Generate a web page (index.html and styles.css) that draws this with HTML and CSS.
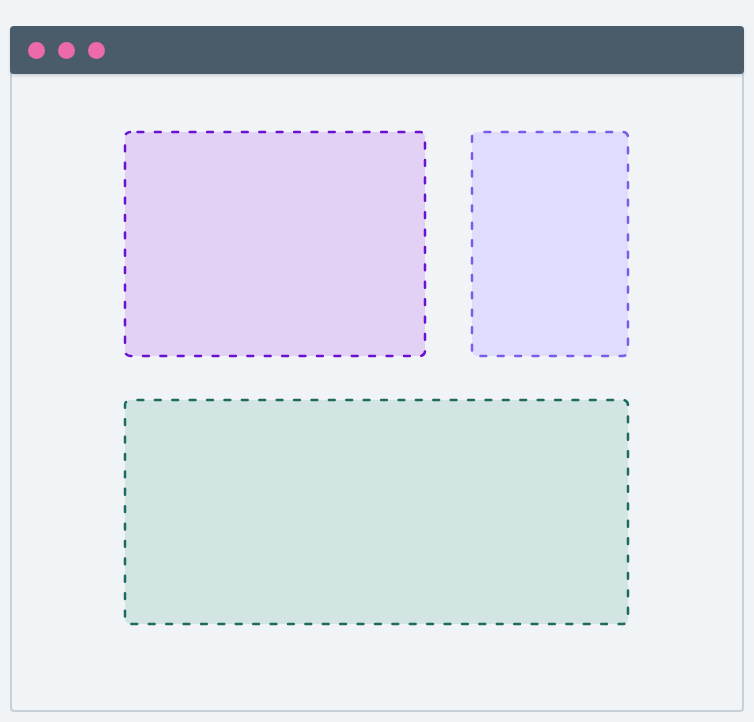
FILE: index.html
```html
<!DOCTYPE html>
<html>
<head>
<meta charset="utf-8">
<link rel="stylesheet" href="styles.css">
</head>
<body>
<div class="window">
  <div class="titlebar">
    <span class="dot"></span><span class="dot"></span><span class="dot"></span>
  </div>
  <div class="content">
    <div class="grid">
      <div class="box box-a"><svg class="outline"><rect x="0" y="0" rx="5" ry="5"/></svg></div>
      <div class="box box-b"><svg class="outline"><rect x="0" y="0" rx="5" ry="5"/></svg></div>
      <div class="box box-c"><svg class="outline"><rect x="0" y="0" rx="5" ry="5"/></svg></div>
    </div>
  </div>
</div>
</body>
</html>
```
FILE: styles.css
```css
html, body {
  margin: 0;
  padding: 0;
  background: #f0f4f7;
  font-family: "Liberation Sans", sans-serif;
}
body {
  padding: 26px 10px 10px 10px;
}
.window {
  width: 734px;
  height: 686px;
  box-sizing: border-box;
  border: 2px solid #c6d0d8;
  border-top: none;
  border-radius: 4px;
  background: #f1f4f7;
  display: flex;
  flex-direction: column;
}
.titlebar {
  height: 48px;
  margin: 0 -2px;
  background: #4a5c6a;
  border-radius: 4px;
  display: flex;
  align-items: center;
  gap: 13px;
  padding-left: 18px;
  box-shadow: 0 2px 3px rgba(100, 120, 135, 0.25);
}
.dot {
  width: 17px;
  height: 17px;
  border-radius: 50%;
  background: #ec6aa8;
}
.content {
  flex: 1;
  padding-top: 58px;
  padding-left: 113px;
  display: flex;
}
.grid {
  display: grid;
  grid-template-columns: 300px 156px;
  grid-template-rows: 224px 224px;
  column-gap: 47px;
  row-gap: 44px;
}
.box {
  position: relative;
  border-radius: 5px;
}
.outline {
  position: absolute;
  inset: 0;
  width: 100%;
  height: 100%;
  overflow: visible;
}
.outline rect {
  width: 100%;
  height: 100%;
  fill: none;
  stroke-width: 2.5;
  stroke-dasharray: 5.8 11.6;
  stroke-dashoffset: 9.9;
  stroke-linecap: round;
}
.box-a {
  background: #e3d0f5;
}
.box-a rect {
  stroke: #6a12cf;
}
.box-b {
  background: #e0dcfd;
}
.box-b rect {
  stroke: #7b5ce6;
}
.box-c {
  grid-column: 1 / 3;
  background: #d2e5e2;
}
.box-c rect {
  stroke: #1d6b5f;
}
```
